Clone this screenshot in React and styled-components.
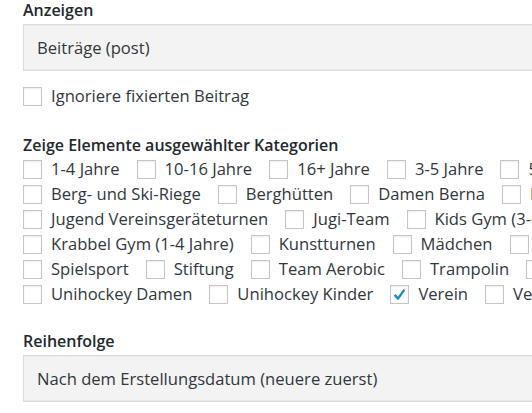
import React from 'react'
import styled, { createGlobalStyle } from 'styled-components'

const GlobalStyle = createGlobalStyle`
  html, body {
    margin: 0;
    padding: 0;
    background: #fff;
  }
  body {
    font-family: 'Open Sans', 'Noto Sans', sans-serif;
    color: #32373c;
    overflow: hidden;
  }
`

const Panel = styled.div`
  width: 532px;
  height: 413px;
  overflow: hidden;
  box-sizing: border-box;
  padding: 0 0 0 23px;
`

const Field = styled.div`
  width: 640px;
`

const Label = styled.div`
  font-size: 16px;
  font-weight: 600;
  line-height: 20px;
  color: #23282d;
  margin-top: ${p => p.$top || 0}px;
  margin-bottom: 4px;
`

const Select = styled.div`
  box-sizing: border-box;
  height: 47px;
  display: flex;
  align-items: center;
  padding-left: 13px;
  background: #f3f3f3;
  border: 1px solid #dcdcdc;
  box-shadow: inset 0 1px 0 #eaeaea, inset 0 -1px 0 #eaeaea;
  font-size: 16.6px;
  color: #32373c;
`

const Rows = styled.div`
  display: flex;
  flex-direction: column;
  gap: 5px;
`

const Row = styled.div`
  display: flex;
  align-items: center;
  white-space: nowrap;
  height: 20px;
  margin-top: ${p => p.$top || 0}px;
`

const Option = styled.label`
  display: flex;
  align-items: center;
  gap: 9px;
  margin-right: 17px;
  font-size: 16.6px;
  line-height: 20px;
  color: #32373c;
`

const Box = styled.span`
  box-sizing: border-box;
  width: 19px;
  height: 19px;
  flex: none;
  border: 1px solid #c3c6c9;
  background: #fff;
  box-shadow: inset 0 1px 2px rgba(0, 0, 0, 0.07);
  display: flex;
  align-items: center;
  justify-content: center;
`

const Check = () => (
  <svg width="15" height="15" viewBox="0 0 20 20">
    <path d="M3.5 10.5 L8 15.5 L16.5 3.5" fill="none" stroke="#1e8cbe" strokeWidth="3.2" strokeLinejoin="round" />
  </svg>
)

const Checkbox = ({ label, checked }) => (
  <Option>
    <Box>{checked && <Check />}</Box>
    {label}
  </Option>
)

const rows = [
  ['1-4 Jahre', '10-16 Jahre', '16+ Jahre', '3-5 Jahre', '5-7 Jahre'],
  ['Berg- und Ski-Riege', 'Berghütten', 'Damen Berna', 'Fitness'],
  ['Jugend Vereinsgeräteturnen', 'Jugi-Team', 'Kids Gym (3-6 Jahre)'],
  ['Krabbel Gym (1-4 Jahre)', 'Kunstturnen', 'Mädchen', 'Männer'],
  ['Spielsport', 'Stiftung', 'Team Aerobic', 'Trampolin', 'Turnen'],
  ['Unihockey Damen', 'Unihockey Kinder', 'Verein', 'Vereinsleben'],
]

export default function App() {
  return (
    <Panel>
      <GlobalStyle />
      <Field>
        <Label>Anzeigen</Label>
        <Select>Beiträge (post)</Select>
      </Field>
      <Row $top={15}>
        <Checkbox label="Ignoriere fixierten Beitrag" />
      </Row>
      <Field>
        <Label $top={29}>Zeige Elemente ausgewählter Kategorien</Label>
        <Rows>
          {rows.map((r, i) => (
            <Row key={i}>
              {r.map(name => (
                <Checkbox key={name} label={name} checked={name === 'Verein'} />
              ))}
            </Row>
          ))}
        </Rows>
      </Field>
      <Field>
        <Label $top={27}>Reihenfolge</Label>
        <Select>Nach dem Erstellungsdatum (neuere zuerst)</Select>
      </Field>
    </Panel>
  )
}
